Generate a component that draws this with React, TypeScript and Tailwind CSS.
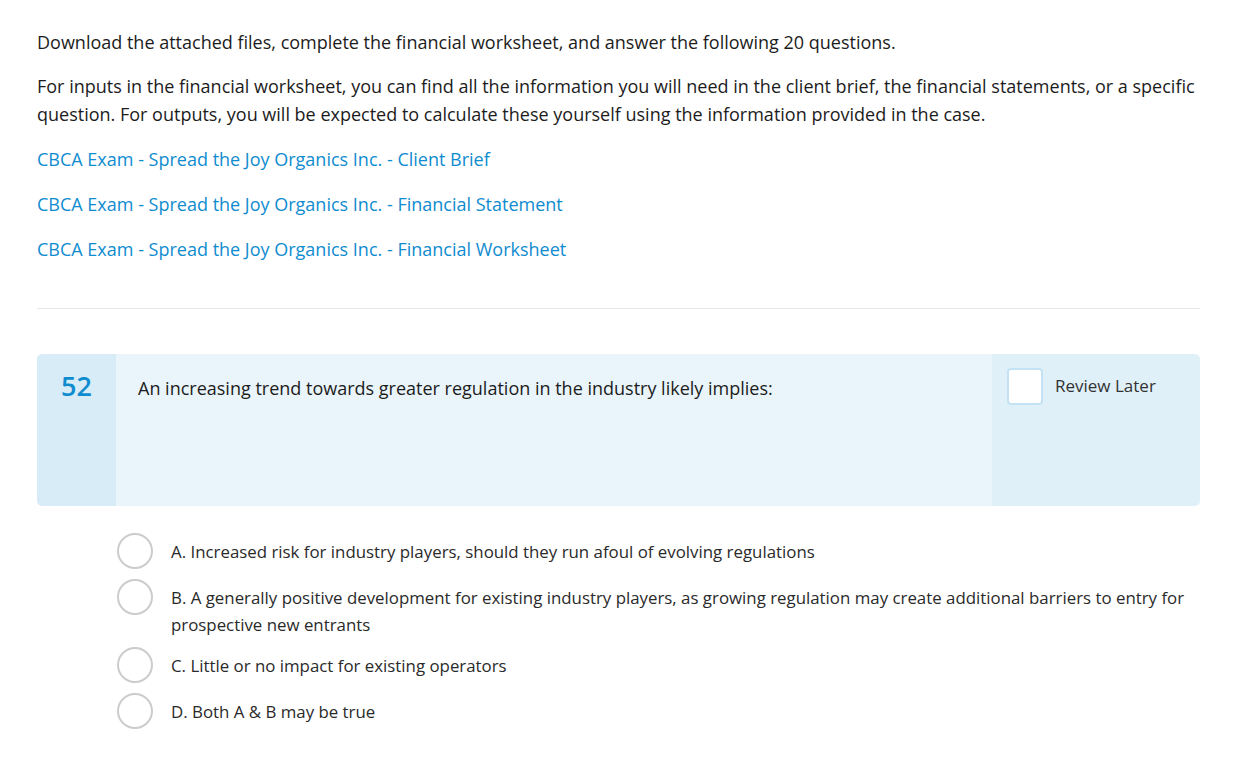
import React from "react";

const links = [
  "CBCA Exam - Spread the Joy Organics Inc. - Client Brief",
  "CBCA Exam - Spread the Joy Organics Inc. - Financial Statement",
  "CBCA Exam - Spread the Joy Organics Inc. - Financial Worksheet",
];

const options = [
  "A. Increased risk for industry players, should they run afoul of evolving regulations",
  "B. A generally positive development for existing industry players, as growing regulation may create additional barriers to entry for prospective new entrants",
  "C. Little or no impact for existing operators",
  "D. Both A & B may be true",
];

export default function App() {
  return (
    <div
      className="min-h-[768px] w-[1245px] bg-white pl-[37px] pr-[45px] pt-[28px] text-[#1c1c1c]"
      style={{ fontFamily: '"Open Sans", "Noto Sans", sans-serif' }}
    >
      <p className="text-[18px] leading-[28px]">
        Download the attached files, complete the financial worksheet, and answer the following 20 questions.
      </p>
      <p className="mt-[16px] text-[18px] leading-[28px]">
        For inputs in the financial worksheet, you can find all the information you will need in the client brief, the financial statements, or a specific question. For outputs, you will be expected to calculate these yourself using the information provided in the case.
      </p>
      <div className="mt-[17px] flex flex-col gap-[17px]">
        {links.map((l) => (
          <a key={l} className="text-[18px] leading-[28px] text-[#0f8ccf]" href="#">
            {l}
          </a>
        ))}
      </div>
      <div className="mt-[45px] h-px bg-[#e6e6e6]" />
      <div className="mt-[45px] flex h-[152px] overflow-hidden rounded-[5px]">
        <div className="flex w-[79px] shrink-0 justify-center bg-[#d7ecf7] pt-[16px]">
          <span className="text-[27px] leading-[32px] font-semibold text-[#0f8ccf]">52</span>
        </div>
        <div className="flex-1 bg-[#e9f4fb] pl-[22px] pt-[20px]">
          <span className="text-[18px] leading-[28px]">
            An increasing trend towards greater regulation in the industry likely implies:
          </span>
        </div>
        <div className="flex w-[208px] shrink-0 items-start gap-[12px] bg-[#e0f0f9] pl-[15px] pt-[14px]">
          <div className="h-[37px] w-[36px] rounded-[4px] border-2 border-[#c3e3f4] bg-white" />
          <span className="pt-[4px] text-[17px] leading-[28px] text-[#333]">Review Later</span>
        </div>
      </div>
      <div className="mt-[27px] flex flex-col gap-[9.5px] pl-[80px]">
        {options.map((o) => (
          <div key={o} className="flex items-start gap-[18px]">
            <div className="h-[36px] w-[36px] shrink-0 rounded-full border-2 border-[#cccccc] bg-white" />
            <span className="pt-[5px] text-[16.85px] leading-[27px] text-[#2a2a2a]">{o}</span>
          </div>
        ))}
      </div>
    </div>
  );
}
